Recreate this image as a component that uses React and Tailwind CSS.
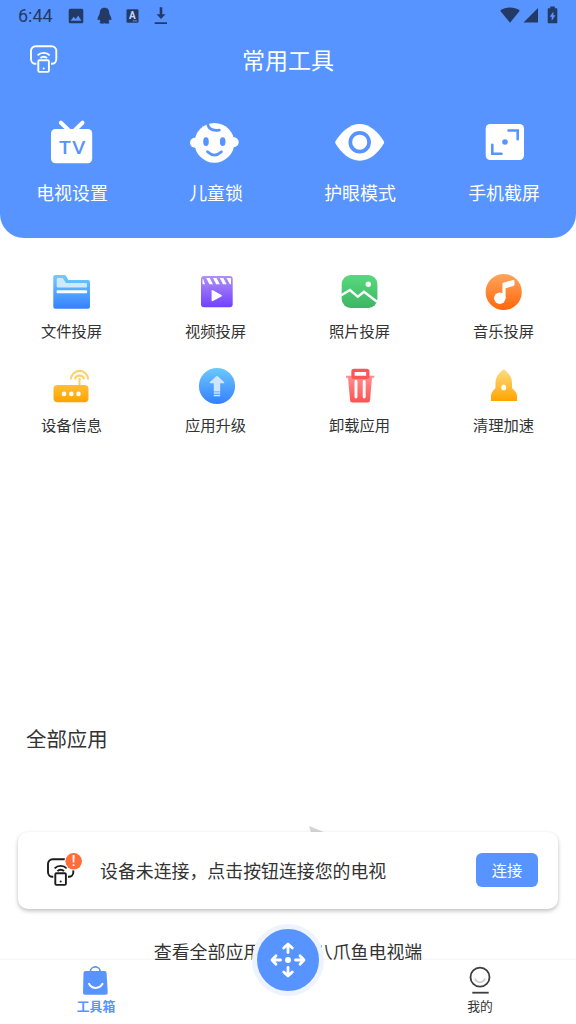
const StatusBar = () => (
  <div className="flex h-8 items-center justify-between pr-[18px] pl-[18px] text-[#233a66]">
    <div className="flex items-center">
      <span className="w-[50px] font-[Roboto] text-[18px] leading-8">6:44</span>
      <svg width="16" height="16" viewBox="0 0 16 16" fill="currentColor">
        <path
          fillRule="evenodd"
          d="M2.2.8h11.6a1.5 1.5 0 0 1 1.5 1.5v11.4a1.5 1.5 0 0 1-1.5 1.5H2.2a1.5 1.5 0 0 1-1.5-1.5V2.300A1.500 1.500 0 0 1 2.200.8ZM2.600 12.700h10.800L10.200 7.600 7.800 11 5.600 8.700Z"
        />
      </svg>
      <svg className="ml-3" width="16" height="18" viewBox="0 0 16 18" fill="currentColor">
        <path d="M8.500.8C5.200.8 3.800 3 3.800 5.800c0 1.800-2.200 4-2.300 6.400 0 1.400.8 1 1.700 0 .3 1 .8 1.800 1.400 2.400-.8.400-1.100 1-.9 1.500.4.800 3.600.7 4.800.100 1.200.6 4.400.7 4.800-.1.200-.5-.1-1.100-.9-1.500.6-.6 1.100-1.400 1.400-2.400.9 1 1.700 1.400 1.700 0-.1-2.400-2.300-4.600-2.300-6.400C13.200 3 11.800.8 8.500.8Z" />
      </svg>
      <svg className="ml-3.5" width="13" height="14" viewBox="0 0 13 14">
        <rect x=".5" y=".3" width="12" height="13.400" rx="1.300" fill="currentColor" />
        <text x="6.300" y="10" textAnchor="middle" fontSize="10" fontWeight="700" fontFamily="Roboto" fill="#c3d7ff">
          A
        </text>
        <path d="M7 11.900h4.500" stroke="#8fb2f5" strokeWidth="1" strokeDasharray="1.500 .7" />
      </svg>
      <svg className="ml-3.5" width="16" height="18" viewBox="0 0 16 18" fill="currentColor">
        <path d="M6.700.2h2.600v7h3.200L8 12 3.500 7.200h3.200ZM1.700 15.300H14V17H1.700Z" />
      </svg>
    </div>
    <div className="-mt-0.5 flex items-center">
      <svg width="20" height="16" viewBox="0 0 20 16" fill="currentColor">
        <path d="M10 15.700.2 3.700C5.500-.6 14.500-.6 19.800 3.700Z" />
      </svg>
      <svg className="ml-[3px]" width="15" height="16" viewBox="0 0 15 16" fill="currentColor">
        <path d="M.5 15.500H15V1Z" />
      </svg>
      <svg className="ml-[9px]" width="11" height="18" viewBox="0 0 11 18" fill="currentColor">
        <path
          fillRule="evenodd"
          d="M3.200.5h4.600v1.800h1.500c.5 0 1 .4 1 .9v13.200c0 .5-.5.900-1 .9H1.700c-.5 0-1-.4-1-.9V3.200c0-.5.500-.9 1-.9h1.500ZM6.400 5.500 2.700 10.700h2v4.200l3.700-5.600h-2Z"
        />
      </svg>
    </div>
  </div>
)

const DeviceIcon = () => (
  <svg width="28" height="28" viewBox="0 0 28 28" fill="none" stroke="currentColor" strokeWidth="1.900">
    <path d="M6.300 18.800H5.500A4.500 4.500 0 0 1 1 14.300V5.800A4.500 4.500 0 0 1 5.500 1.300h16.300a4.500 4.500 0 0 1 4.500 4.500v8.500a4.500 4.500 0 0 1-4.500 4.500h-.8" />
    <path d="M7.600 10.300C10.600 7 16.800 7 19.700 10.300M10.400 13.100c1.700-1.900 4.900-1.900 6.600 0" />
    <rect x="8.300" y="15.300" width="10.600" height="11.600" rx="1.200" />
    <circle cx="13.700" cy="23.600" r="1" fill="currentColor" stroke="none" />
  </svg>
)

const TvIcon = () => (
  <svg width="48" height="48" viewBox="0 0 48 48">
    <path d="M12.900 4.700 20.500 12M34.500 4.700 27 12" stroke="#fff" strokeWidth="4" strokeLinecap="round" />
    <rect x="3" y="11" width="41.200" height="34.300" rx="4.500" fill="#fff" />
    <text x="9.500 20.900" y="36.500" transform="scale(1.160 1)" fontSize="18" fontWeight="600" fontFamily="Open Sans" fill="#5794ff">
      TV
    </text>
  </svg>
)

const BabyIcon = () => (
  <svg className="overflow-visible" width="48" height="48" viewBox="0 0 48 48" fill="#fff">
    <circle cx="22.400" cy="24.800" r="19.900" />
    <circle cx="3" cy="24.800" r="5" />
    <circle cx="41.700" cy="24.300" r="5" />
    <g fill="#5794ff">
      <ellipse cx="14" cy="23.700" rx="2.800" ry="4.400" />
      <ellipse cx="30.700" cy="23.700" rx="2.800" ry="4.400" />
    </g>
    <path
      d="M15.500 33.800Q22.400 40.300 29.500 33.800M15.600 4.200C15.300 9.500 18.800 13.500 27.300 12.200"
      fill="none"
      stroke="#5794ff"
      strokeWidth="2.700"
      strokeLinecap="round"
    />
  </svg>
)

const EyeIcon = () => (
  <svg className="overflow-visible" width="48" height="48" viewBox="0 0 48 48">
    <path d="M-.5 25.500Q-1.100 24.300-.5 23.200C5.500 13.500 14 6 23.700 6S42 13.500 47.800 23.200Q48.400 24.300 47.800 25.500C42 35 34 42.700 23.700 42.700S5.500 35-.5 25.500Z" fill="#fff" />
    <circle cx="23.700" cy="24.200" r="9.400" fill="none" stroke="#5794ff" strokeWidth="3.700" />
  </svg>
)

const CaptureIcon = () => (
  <svg width="48" height="48" viewBox="0 0 48 48">
    <rect x="5.700" y="6" width="38.300" height="36" rx="4.500" fill="#fff" />
    <path d="M28.500 12.500H37.700V21.300M12.300 26.800V35.700H21.500" fill="none" stroke="#5794ff" strokeWidth="2.600" strokeLinecap="round" />
    <circle cx="25" cy="24" r="2.800" fill="#5794ff" />
  </svg>
)

const Gradient = ({ id, from, to }) => (
  <linearGradient id={id} x1="0" y1="0" x2="0" y2="1">
    <stop stopColor={from} />
    <stop offset="1" stopColor={to} />
  </linearGradient>
)

const FolderIcon = () => (
  <svg width="40" height="40" viewBox="0 0 40 40">
    <Gradient id="folder" from="#6fcdff" to="#3680ff" />
    <path d="M3.300 3H12.500a2 2 0 0 1 1.700 1L16.300 8H36a2 2 0 0 1 2 2v24.700a2 2 0 0 1-2 2H3.300a2 2 0 0 1-2-2V5a2 2 0 0 1 2-2Z" fill="url(#folder)" />
    <path d="M5.700 6H10.700L14 10.900H34a1 1 0 0 1 1 1v2.500a1 1 0 0 1-1 1H5.700a1 1 0 0 1-1-1V7a1 1 0 0 1 1-1Z" fill="#cfe7ff" />
    <rect x="4.600" y="18.300" width="30.500" height="2.900" rx="1" fill="#fff" />
  </svg>
)

const VideoIcon = () => (
  <svg width="40" height="40" viewBox="0 0 40 40">
    <Gradient id="video" from="#b190f5" to="#7040ff" />
    <rect x="5" y="4" width="31.700" height="31.300" rx="3" fill="url(#video)" />
    <path d="M7 6.700 9 12.300H6.500V7ZM10.200 6H13.700L17 12.300H13.400ZM17 6H20.500L23.800 12.300H20.200ZM23.800 6H27.300L30.600 12.300H27ZM30.500 6H34a1 1 0 0 1 1 1V12.300H33.800Z" fill="#fff" />
    <path d="M16.500 19V28.300L25 23.700Z" fill="#fff" stroke="#fff" strokeWidth="1.800" strokeLinejoin="round" />
  </svg>
)

const PhotoIcon = () => (
  <svg width="40" height="40" viewBox="0 0 40 40">
    <Gradient id="photo" from="#59d97d" to="#3db663" />
    <rect x="1.700" y="3" width="35.700" height="33" rx="9" fill="url(#photo)" />
    <path d="M1.300 23.300 10 18 17.800 24.800 24 19.800 37 29.700" fill="none" stroke="#fff" strokeWidth="2.400" />
    <circle cx="28.300" cy="12.300" r="2.700" fill="#fff" />
  </svg>
)

const MusicIcon = () => (
  <svg width="40" height="40" viewBox="0 0 40 40">
    <Gradient id="music" from="#ffa55e" to="#ff6709" />
    <circle cx="19.700" cy="20" r="18.100" fill="url(#music)" />
    <g fill="#fff">
      <circle cx="15.800" cy="26.300" r="5.700" />
      <path d="M18.400 11.800Q18.400 11 19.200 10.700L28.700 8.100Q30.500 7.600 30.500 9.200V12.600Q30.500 13.600 29.500 13.900L21.600 16.300V26.500L18.400 24Z" />
    </g>
  </svg>
)

const RouterIcon = () => (
  <svg width="40" height="40" viewBox="0 0 40 40">
    <Gradient id="router" from="#ffbf35" to="#ffa300" />
    <g fill="none" stroke="#ffd169" strokeWidth="2.100">
      <path d="M18.900 13.500A8.600 8.600 0 1 1 36.100 13.500M23 13.500A4.600 4.600 0 0 1 32.100 13.500" />
      <path d="M27.500 12V20" />
    </g>
    <rect x="1.500" y="19" width="35" height="17.200" rx="4" fill="url(#router)" />
    <g fill="#fff">
      <circle cx="12" cy="27.900" r="2.300" />
      <circle cx="19.400" cy="27.900" r="2.300" />
      <circle cx="26.500" cy="27.900" r="2.300" />
    </g>
  </svg>
)

const UpgradeIcon = () => (
  <svg width="40" height="40" viewBox="0 0 40 40">
    <Gradient id="upgrade" from="#6bc9ff" to="#357fff" />
    <circle cx="21" cy="20" r="18.100" fill="url(#upgrade)" />
    <path d="M20.200 10.300Q21 9.500 21.800 10.300L28 16Q29 17.300 27.500 17.300H24.200V25H17.800V17.300H14.500Q13 17.300 14 16ZM17.800 25.600H24.200V26.700H17.800ZM17.800 27.300H24.200V28.300H17.800ZM17.800 28.900H24.200V30.200H17.800Z" fill="#d0e6ff" />
  </svg>
)

const TrashIcon = () => (
  <svg width="40" height="40" viewBox="0 0 40 40">
    <Gradient id="trash" from="#ff8f8f" to="#ff5252" />
    <path d="M6 9.700H34.300V11.700H32L30 34.500Q29.800 36.500 27.800 36.500H12.300Q10.300 36.500 10.100 34.500L8 11.700H6Z" fill="url(#trash)" />
    <path d="M16 15.500V31M24.200 15.500V31" stroke="#fff" strokeWidth="2.900" strokeLinecap="round" />
    <rect x="13" y="4.300" width="14.800" height="7" rx="1" fill="#fff" stroke="#ff5555" strokeWidth="3.300" />
  </svg>
)

const RocketIcon = () => (
  <svg width="40" height="40" viewBox="0 0 40 40">
    <Gradient id="rocket" from="#ffdd80" to="#ffa300" />
    <path d="M18.800 3.800Q19.700 3 20.600 3.800C25 7.500 27.900 11.500 28 17V22L31.500 25.800Q33 27.500 33 30V35H7V30Q7 27.500 8.300 25.800L11.500 22V17C11.600 11.500 14.500 7.500 18.800 3.800Z" fill="url(#rocket)" />
    <ellipse cx="19.700" cy="21.400" rx="2.400" ry="2.900" fill="#fff" />
  </svg>
)

const BagIcon = () => (
  <svg width="28" height="30" viewBox="0 0 28 30">
    <path d="M8.400 7.500V6.500a4.900 4.600 0 0 1 9.800 0v1" fill="none" stroke="#5794ff" strokeWidth="1.700" />
    <path d="M3.500 6H22.600a2 2 0 0 1 2 1.900L25.700 27.500a2 2 0 0 1-2 2.200H3a2 2 0 0 1-2-2.200L1.500 7.900A2 2 0 0 1 3.500 6Z" fill="#5794ff" />
    <path d="M7 18.800C9.800 24.300 17.600 24.300 20.500 18.800" fill="none" stroke="#fff" strokeWidth="2" strokeLinecap="round" />
  </svg>
)

const MeIcon = () => (
  <svg width="28" height="30" viewBox="0 0 28 30" fill="none" stroke="#3e3e3e" strokeWidth="1.800">
    <circle cx="14" cy="12.200" r="9.500" />
    <path d="M8.900 13.500C10.500 18.500 17.500 18.500 19.100 13.500" stroke="#cfcfcf" />
    <path d="M6.300 27.700H22.700" />
  </svg>
)

const MoveIcon = () => (
  <svg width="36" height="36" viewBox="0 0 36 36" fill="none" stroke="#fff" strokeWidth="2.800" strokeLinecap="round" strokeLinejoin="round">
    <circle cx="18" cy="18" r="3" fill="#fff" stroke="none" />
    <path d="M18 10.500V2.500M13.700 6 18 2 22.300 6M18 25.500V33.500M13.700 30 18 34 22.300 30M10.500 18H2.500M6 13.700 2 18 6 22.300M25.500 18H33.500M30 13.700 34 18 30 22.300" />
  </svg>
)

const mainTools = [
  { label: '电视设置', Icon: TvIcon },
  { label: '儿童锁', Icon: BabyIcon },
  { label: '护眼模式', Icon: EyeIcon },
  { label: '手机截屏', Icon: CaptureIcon }
]

const tools = [
  { label: '文件投屏', Icon: FolderIcon },
  { label: '视频投屏', Icon: VideoIcon },
  { label: '照片投屏', Icon: PhotoIcon },
  { label: '音乐投屏', Icon: MusicIcon },
  { label: '设备信息', Icon: RouterIcon },
  { label: '应用升级', Icon: UpgradeIcon },
  { label: '卸载应用', Icon: TrashIcon },
  { label: '清理加速', Icon: RocketIcon }
]

const App = () => {
  return (
    <div className="relative flex h-[1024px] w-[576px] flex-col overflow-hidden bg-white font-['Noto_Sans_CJK_SC',sans-serif] text-[#333]">
      <div className="min-h-0 flex-1 overflow-hidden">
        {/* Header */}
        <header className="h-[238px] rounded-b-3xl bg-[#5794ff] text-white">
          <StatusBar />
          <div className="grid h-[58px] grid-cols-[28px_1fr_28px] items-center px-[30px]">
            <div className="-mt-1">
              <DeviceIcon />
            </div>
            <h1 className="-mt-1 text-center text-[23px] leading-8">常用工具</h1>
          </div>
          <div className="mt-7 grid grid-cols-4">
            {mainTools.map(({ label, Icon }) => (
              <div key={label} className="flex flex-col items-center">
                <Icon />
                <span className="mt-3 text-[17.900px] leading-7">{label}</span>
              </div>
            ))}
          </div>
        </header>

        {/* Tool grid */}
        <div className="mt-[34px] grid grid-cols-4 gap-y-[23px]">
          {tools.map(({ label, Icon }) => (
            <div key={label} className="flex flex-col items-center">
              <Icon />
              <span className="mt-1.5 mr-px mb-px text-[15.300px] leading-6">{label}</span>
            </div>
          ))}
        </div>

        {/* All apps */}
        <h2 className="mt-[285px] px-[26px] text-[20.400px] leading-8">全部应用</h2>
        <svg className="mt-[72px] ml-[309px]" width="16" height="8" viewBox="0 0 16 8">
          <path d="M0 0 16 6.500V8H2.500Z" fill="#d4d4d4" />
        </svg>
        <p className="mt-[103px] text-center text-[17.900px] leading-7">查看全部应用请安装八爪鱼电视端</p>
      </div>

      {/* Connection banner */}
      <div className="absolute inset-x-[18px] bottom-[115px] flex h-[77px] items-center rounded-[10px] bg-white pr-5 pl-[29px] shadow-[0_2px_4px_rgba(0,0,0,0.25)]">
        <div className="relative mt-[3px] text-[#1c1c1c]">
          <DeviceIcon />
          <svg className="absolute -top-[6px] left-[17px]" width="20" height="20" viewBox="0 0 20 20">
            <circle cx="9.700" cy="9.300" r="9.300" fill="#fff" />
            <circle cx="9.700" cy="9.300" r="8.300" fill="#ff6d3b" />
            <text x="9.700" y="14.200" textAnchor="middle" fontSize="14" fontWeight="500" fontFamily="Roboto" fill="#fff">
              !
            </text>
          </svg>
        </div>
        <span className="-mt-0.5 ml-[25px] text-[17.900px] leading-7">设备未连接，点击按钮连接您的电视</span>
        <button className="-mt-px mb-px ml-auto h-[34px] w-[62px] rounded-md bg-[#5794ff] pb-0.5 text-[15.300px] leading-6 text-white">连接</button>
      </div>

      {/* Tab bar */}
      <nav className="relative grid h-16 shrink-0 grid-cols-3 bg-white shadow-[0_-1px_2px_rgba(0,0,0,0.05)]">
        <div className="flex flex-col items-center pt-[5px] text-[#5794ff]">
          <BagIcon />
          <span className="text-[12.800px] leading-[22px] font-bold">工具箱</span>
        </div>
        <button className="-mt-9 flex h-[72px] w-[72px] items-center justify-center justify-self-center rounded-full border-[5px] border-[#edf3ff] bg-[#5794ff]">
          <MoveIcon />
        </button>
        <div className="flex flex-col items-center pt-[5px]">
          <MeIcon />
          <span className="text-[12.800px] leading-[22px]">我的</span>
        </div>
      </nav>
    </div>
  )
}

export default App
